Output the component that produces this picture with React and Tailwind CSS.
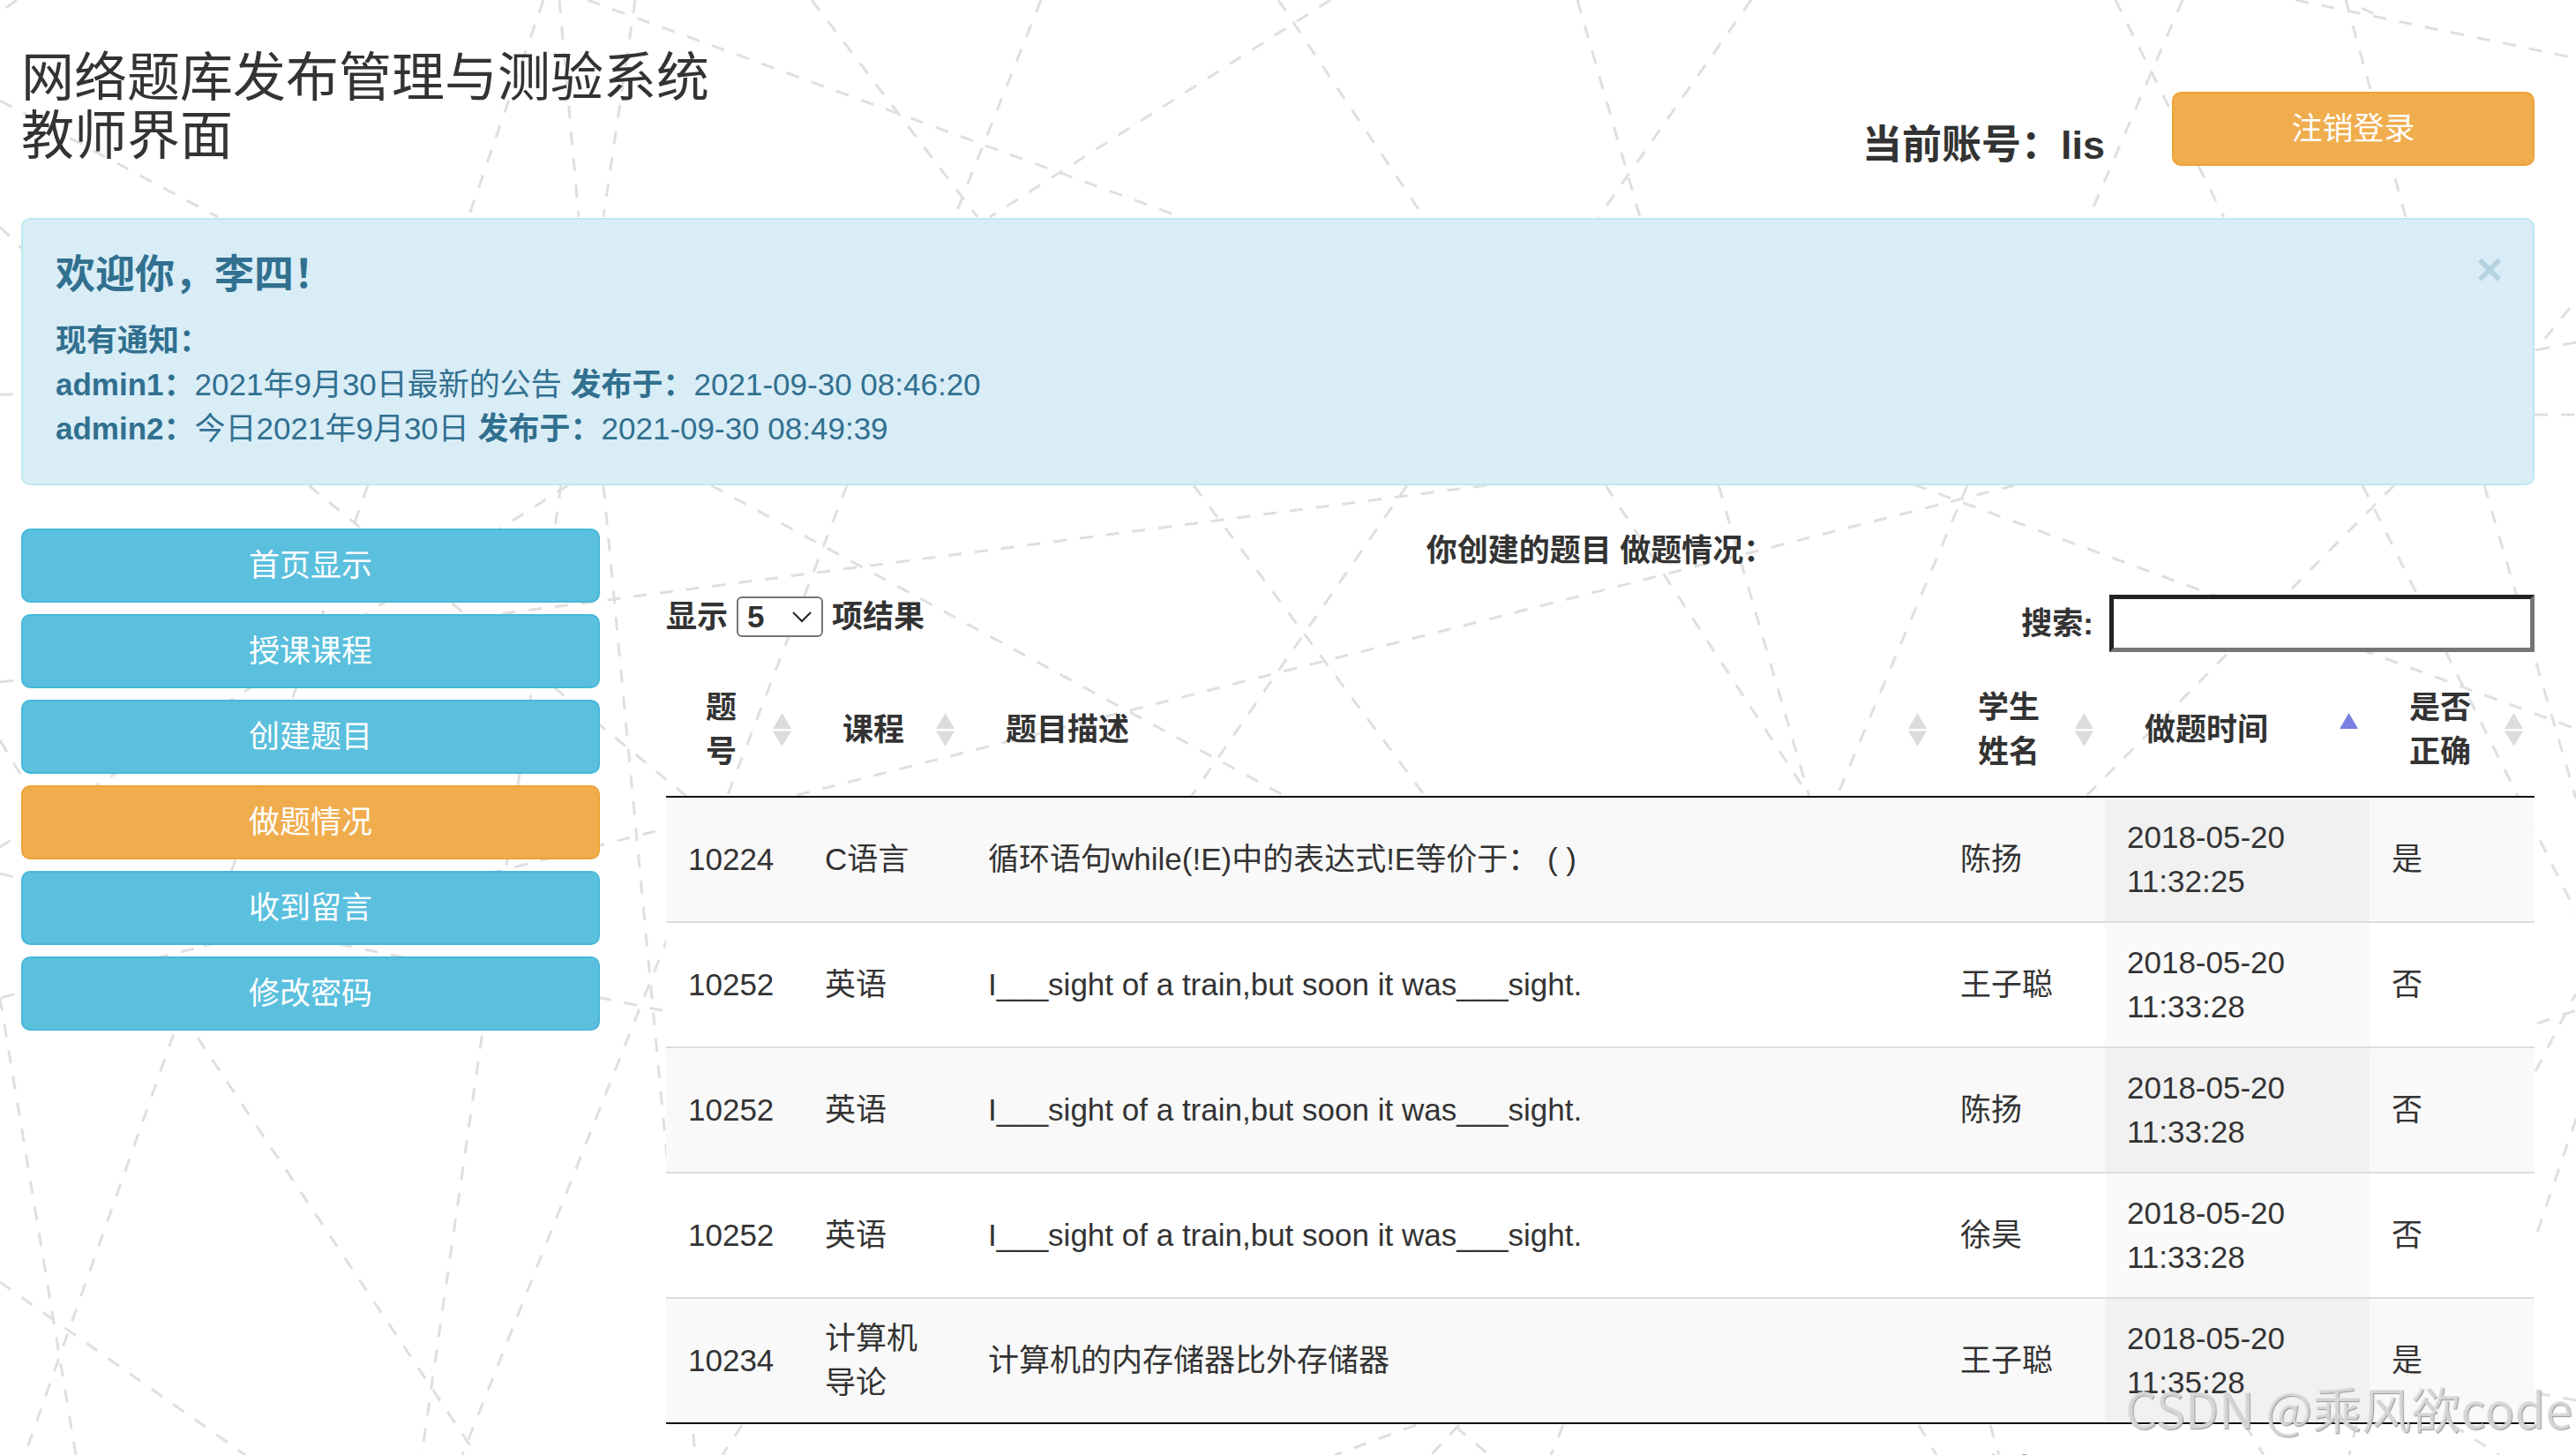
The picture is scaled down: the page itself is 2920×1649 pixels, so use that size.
import { useState } from 'react';

const menu = ['首页显示', '授课课程', '创建题目', '做题情况', '收到留言', '修改密码'];

const notices = [
    { admin: 'admin1', text: '2021年9月30日最新的公告', time: '2021-09-30 08:46:20' },
    { admin: 'admin2', text: '今日2021年9月30日', time: '2021-09-30 08:49:39' },
];

const columns = [
    { key: 'no', title: '题号', width: 'w-[155px]' },
    { key: 'course', title: '课程', width: 'w-[185px]' },
    { key: 'desc', title: '题目描述', width: '' },
    { key: 'student', title: '学生姓名', width: 'w-[189px]' },
    { key: 'time', title: '做题时间', width: 'w-[300px]' },
    { key: 'right', title: '是否正确', width: 'w-[187px]' },
];

const rows = [
    { no: '10224', course: 'C语言', desc: '循环语句while(!E)中的表达式!E等价于： ( )', student: '陈扬', time: '2018-05-20 11:32:25', right: '是' },
    { no: '10252', course: '英语', desc: 'I___sight of a train,but soon it was___sight.', student: '王子聪', time: '2018-05-20 11:33:28', right: '否' },
    { no: '10252', course: '英语', desc: 'I___sight of a train,but soon it was___sight.', student: '陈扬', time: '2018-05-20 11:33:28', right: '否' },
    { no: '10252', course: '英语', desc: 'I___sight of a train,but soon it was___sight.', student: '徐昊', time: '2018-05-20 11:33:28', right: '否' },
    { no: '10234', course: '计算机导论', desc: '计算机的内存储器比外存储器', student: '王子聪', time: '2018-05-20 11:35:28', right: '是' },
];

// x1, y1, x2, y2 of every dashed line behind the page
const lines = [
    [616, 0, 531, 246], [634, 0, 656, 246], [720, 0, 684, 246], [666, 0, 1339, 246],
    [920, 0, 1108, 246], [0, 114, 247, 246], [19, 0, 0, 14], [0, 257, 25, 282],
    [0, 447, 24, 447], [1180, 0, 1082, 246], [1508, 0, 1122, 246], [1449, 0, 1614, 246],
    [1788, 0, 1859, 246], [1985, 0, 1812, 246], [2398, 0, 2521, 246], [2474, 0, 2368, 246],
    [2602, 0, 2920, 66], [2659, 0, 2727, 246], [2677, 9, 2702, 21], [2913, 349, 2874, 397],
    [2920, 388, 2873, 397], [2873, 470, 2920, 470], [417, 550, 28, 1649], [644, 550, 0, 960],
    [636, 550, 478, 1649], [684, 550, 788, 1649], [806, 550, 1458, 903], [960, 550, 824, 903],
    [1685, 550, 519, 702], [350, 550, 780, 904], [2284, 550, 0, 1131], [0, 839, 24, 879],
    [0, 990, 24, 996], [0, 773, 24, 770], [384, 1070, 755, 1146], [0, 1131, 86, 1649],
    [224, 1176, 540, 1649], [758, 1060, 524, 1649], [0, 1453, 278, 1649], [841, 1615, 819, 1649],
    [1605, 1615, 1513, 1649], [1654, 1615, 1622, 1649], [1650, 1617, 1688, 1649], [1772, 1615, 1758, 1649],
    [2175, 1615, 2195, 1649], [2256, 1615, 2266, 1649], [2545, 1615, 2566, 1649], [2671, 1615, 2663, 1649],
    [2780, 1615, 2833, 1649], [1353, 550, 1616, 903], [1595, 550, 1350, 903], [1820, 550, 2051, 903],
    [1948, 550, 2051, 903], [2230, 550, 2082, 903], [2169, 549, 2920, 826], [2714, 550, 2364, 903],
    [2678, 550, 2920, 1034], [2816, 550, 2920, 905], [2876, 1160, 2920, 1145], [2874, 1214, 2920, 1126],
    [2920, 1268, 2876, 1397], [2876, 1579, 2920, 1587],
];

const Backdrop = () => (
    <svg className="absolute inset-0 -z-10 w-full h-full" fill="none" stroke="#dfdfdf" strokeWidth="3" strokeDasharray="15 15" aria-hidden="true">
        {lines.map(([x1, y1, x2, y2], i) => (
            <line key={i} x1={x1} y1={y1} x2={x2} y2={y2} />
        ))}
    </svg>
);

const SortIcon = ({ active }) => (
    <svg className="shrink-0 w-[21px] h-[38px]" viewBox="0 0 21 38" fill={active ? '#7b80e0' : '#dcdcdc'}>
        <path d="M10.5 0 21 18H0z" />
        {!active && <path d="M0 20.5H21L10.5 38z" />}
    </svg>
);

const App = () => {
    const [current, setCurrent] = useState('做题情况');
    const [showAlert, setShowAlert] = useState(true);
    const [size, setSize] = useState('5');
    const [search, setSearch] = useState('');
    const [sortBy, setSortBy] = useState('time');

    return (
        <div className="relative isolate h-screen overflow-hidden bg-white pl-6 pr-[47px] text-[35px] leading-[50px] text-[#333] font-['Liberation_Sans','Noto_Sans_CJK_SC',sans-serif]">
            <Backdrop />

            <header className="flex items-end justify-between pt-14 pb-[59px]">
                <h1 className="text-[60px] leading-[66px]">
                    网络题库发布管理与测验系统
                    <br />
                    教师界面
                </h1>
                <div className="flex items-end gap-[76px]">
                    <h2 className="text-[45px] leading-[46px] font-bold">当前账号：lis</h2>
                    <button className="w-[411px] h-[84px] rounded-[10px] border-2 border-[#eea236] bg-[#f0ad4e] text-white">注销登录</button>
                </div>
            </header>

            {showAlert && (
                <div className="flex items-start justify-between rounded-[10px] border-2 border-[#bce8f1] bg-[#d9edf7] py-[37px] pl-[37px] pr-[34px] text-[#31708f]">
                    <div>
                        <h2 className="mb-[23px] text-[45px] leading-[52px] font-bold">欢迎你，李四！</h2>
                        <p className="font-bold">现有通知：</p>
                        {notices.map((n) => (
                            <p key={n.admin}>
                                <strong>{n.admin}：</strong>{n.text} <strong>发布于：</strong>{n.time}
                            </p>
                        ))}
                    </div>
                    <button className="text-[52px] leading-[38px] font-bold opacity-20" aria-label="关闭" onClick={() => setShowAlert(false)}>×</button>
                </div>
            )}

            <div className="mt-[49px] grid grid-cols-4 gap-x-[75px]">
                <nav className="flex flex-col gap-[13px]">
                    {menu.map((item) => (
                        <button
                            key={item}
                            onClick={() => setCurrent(item)}
                            className={`h-[84px] rounded-[10px] border-2 text-white ${item === current ? 'border-[#eea236] bg-[#f0ad4e]' : 'border-[#46b8da] bg-[#5bc0de]'}`}
                        >
                            {item}
                        </button>
                    ))}
                </nav>

                <main className="col-span-3">
                    <h3 className="mb-[25px] text-center font-bold">你创建的题目 做题情况：</h3>

                    <div className="mb-[13px] flex items-start justify-between font-bold">
                        <div className="flex items-center gap-[10px]">
                            <label htmlFor="size">显示</label>
                            <div className="relative flex">
                                <select
                                    id="size"
                                    value={size}
                                    onChange={(e) => setSize(e.target.value)}
                                    className="w-[98px] h-[46px] appearance-none rounded-[6px] border-2 border-[#767676] bg-white pl-[10px] leading-[42px]"
                                >
                                    <option>5</option>
                                    <option>10</option>
                                    <option>25</option>
                                </select>
                                <svg className="pointer-events-none absolute right-[13px] top-[17px] w-[22px] h-[13px]" viewBox="0 0 22 13" fill="none" stroke="#222" strokeWidth="2">
                                    <path d="M1 1 11 11 21 1" />
                                </svg>
                            </div>
                            <label htmlFor="size">项结果</label>
                        </div>
                        <label className="flex items-center gap-[18px]">
                            搜索:
                            <input
                                type="search"
                                value={search}
                                onChange={(e) => setSearch(e.target.value)}
                                className="w-[482px] h-[65px] border-[5px] border-t-[#222] border-l-[#222] border-b-[#767676] border-r-[#767676] bg-white"
                            />
                        </label>
                    </div>

                    <table className="w-full table-fixed border-separate border-spacing-0">
                        <thead>
                            <tr>
                                {columns.map((c) => (
                                    <th key={c.key} className={`border-b-2 border-[#111] py-[25px] pl-[45px] pr-[13px] ${c.width}`}>
                                        <button className="flex w-full items-center justify-between gap-[11px] text-left" onClick={() => setSortBy(c.key)}>
                                            <span>{c.title}</span>
                                            <SortIcon active={c.key === sortBy} />
                                        </button>
                                    </th>
                                ))}
                            </tr>
                        </thead>
                        <tbody>
                            {rows.map((row, i) => (
                                <tr key={i} className="group odd:bg-[#f9f9f9] even:bg-white">
                                    {columns.map((c) => (
                                        <td
                                            key={c.key}
                                            className={`h-[140px] px-[25px] py-5 border-[#ddd] group-not-first:border-t-2 ${c.key === sortBy ? 'group-odd:bg-[#f1f1f1] group-even:bg-[#fafafa]' : ''}`}
                                        >
                                            {row[c.key]}
                                        </td>
                                    ))}
                                </tr>
                            ))}
                        </tbody>
                        <tfoot>
                            <tr>
                                {columns.map((c) => (
                                    <th key={c.key} className="border-t-2 border-[#111] pt-[28px] pb-[15px] px-[45px] text-left">{c.title}</th>
                                ))}
                            </tr>
                        </tfoot>
                    </table>
                </main>
            </div>

            <div className="absolute right-0 bottom-6 pr-1 font-['Noto_Sans_CJK_SC',sans-serif] text-[56px] leading-[60px] text-[#e2e2e2]/80 [text-shadow:1px_1px_1px_#999]">
                CSDN @乘风欲code
            </div>
        </div>
    );
};

export default App;
